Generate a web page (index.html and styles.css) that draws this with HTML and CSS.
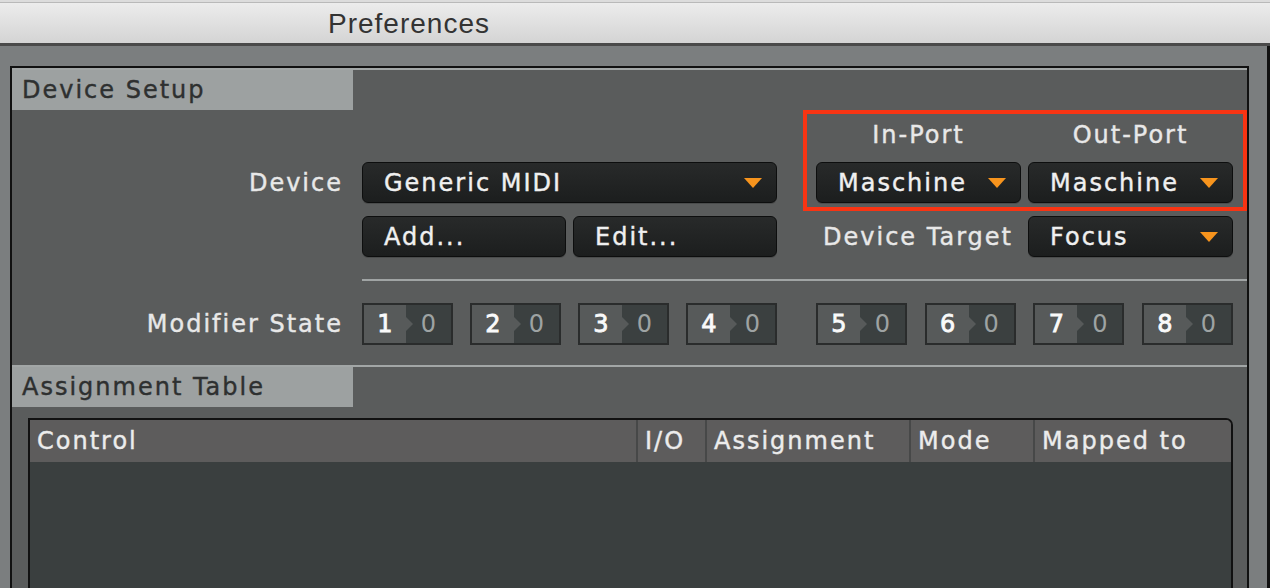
FILE: index.html
```html
<!DOCTYPE html>
<html lang="en">
<head>
    <meta charset="UTF-8">
    <meta name="viewport" content="width=device-width, initial-scale=1.0">
    <title>Preferences</title>
    <link rel="stylesheet" href="styles.css">
</head>
<body>
    <div class="titlebar">
        <span class="title">Preferences</span>
    </div>

    <div class="window">
        <div class="panel">
            <div class="section-head">
                <div class="tab">Device Setup</div>
            </div>

            <section class="setup">
                <div class="setup-grid">
                    <div class="port-label col-in">In-Port</div>
                    <div class="port-label col-out">Out-Port</div>

                    <div class="label">Device</div>
                    <div class="select col-wide">
                        <span>Generic MIDI</span>
                        <svg class="caret" viewBox="0 0 18 10"><polygon points="0,0 18,0 9,10"/></svg>
                    </div>
                    <div class="select col-in">
                        <span>Maschine</span>
                        <svg class="caret" viewBox="0 0 18 10"><polygon points="0,0 18,0 9,10"/></svg>
                    </div>
                    <div class="select col-out">
                        <span>Maschine</span>
                        <svg class="caret" viewBox="0 0 18 10"><polygon points="0,0 18,0 9,10"/></svg>
                    </div>

                    <button class="btn col-a">Add...</button>
                    <button class="btn col-b">Edit...</button>
                    <div class="label col-in target-label">Device Target</div>
                    <div class="select col-out">
                        <span>Focus</span>
                        <svg class="caret" viewBox="0 0 18 10"><polygon points="0,0 18,0 9,10"/></svg>
                    </div>
                </div>

                <!-- annotation box round the port selectors -->
                <div class="highlight"></div>

                <div class="rule"></div>

                <div class="modifier-row">
                    <div class="label">Modifier State</div>
                    <div class="mod-group group-left">
                        <div class="mod"><span class="mod-key">1</span><span class="mod-val">0</span></div>
                        <div class="mod"><span class="mod-key">2</span><span class="mod-val">0</span></div>
                        <div class="mod"><span class="mod-key">3</span><span class="mod-val">0</span></div>
                        <div class="mod"><span class="mod-key">4</span><span class="mod-val">0</span></div>
                    </div>
                    <div class="mod-group group-right">
                        <div class="mod"><span class="mod-key">5</span><span class="mod-val">0</span></div>
                        <div class="mod"><span class="mod-key">6</span><span class="mod-val">0</span></div>
                        <div class="mod"><span class="mod-key">7</span><span class="mod-val">0</span></div>
                        <div class="mod"><span class="mod-key">8</span><span class="mod-val">0</span></div>
                    </div>
                </div>
            </section>

            <div class="section-head">
                <div class="tab">Assignment Table</div>
            </div>

            <div class="table">
                <div class="table-head">
                    <div class="th">Control</div>
                    <div class="th">I/O</div>
                    <div class="th">Assignment</div>
                    <div class="th">Mode</div>
                    <div class="th">Mapped to</div>
                </div>
                <div class="table-body"></div>
            </div>
        </div>
    </div>
</body>
</html>
```

FILE: styles.css
```css
html, body {
    height: 100%;
    overflow: hidden;
}

body {
    margin: 0;
    padding: 0;
    font-family: "DejaVu Sans", sans-serif;
    font-size: 24px;
    letter-spacing: 2px;
    background-color: #7b7e7f;
    -webkit-text-stroke: 0.4px currentColor;
}

.titlebar {
    height: 43px;
    background: linear-gradient(#dcdcdc 0, #dcdcdc 2px, #b9b9b9 2px, #b9b9b9 3px, #ececec 3px, #d4d4d4 100%);
    border-bottom: 3px solid #4a4a4a;
}

.title {
    display: inline-block;
    padding-left: 328px;
    line-height: 47px;
    font-family: "Liberation Sans", sans-serif;
    font-size: 28px;
    letter-spacing: 1px;
    color: #333;
    -webkit-text-stroke: 0;
}

.window {
    background: #7b7e7f;
    padding: 20px 18px 0 10px;
    border-right: 3px solid #111;
    height: 522px;
}

.panel {
    background: #5a5c5c;
    border: 2px solid #111;
    border-bottom: none;
    height: 520px;
    overflow: hidden;
}

.section-head {
    border-top: 2px solid #a2a6a6;
    height: 40px;
}

.tab {
    width: 331px;
    height: 40px;
    line-height: 40px;
    padding-left: 10px;
    background: #9da1a1;
    color: #2e3030;
}

.setup {
    position: relative;
}

.setup-grid,
.modifier-row {
    display: grid;
    grid-template-columns: 343px 204px 204px 25px 205px 205px;
    column-gap: 7px;
}

.setup-grid {
    grid-template-rows: 28px 41px 41px;
    row-gap: 13px;
    padding-top: 11px;
}

.label {
    grid-column: 1;
    text-align: right;
    padding-right: 12px;
    align-self: center;
    color: #e8e8e8;
}

.target-label {
    padding-right: 8px;
}

.port-label {
    text-align: center;
    line-height: 28px;
    color: #e8e8e8;
}

.col-wide { grid-column: 2 / 4; }
.col-a { grid-column: 2; }
.col-b { grid-column: 3; }
.col-in { grid-column: 5; }
.col-out { grid-column: 6; }

.select,
.btn {
    display: flex;
    align-items: center;
    justify-content: space-between;
    box-sizing: border-box;
    height: 41px;
    padding: 0 14px 0 21px;
    background: linear-gradient(#282a2a, #1c1e1e);
    border: 1px solid #0d0e0e;
    border-radius: 6px;
    box-shadow: 0 1px 0 #4a4c4c;
    color: #f0f0f0;
    font-family: inherit;
    font-size: 24px;
    letter-spacing: 2px;
}

.caret {
    width: 18px;
    height: 10px;
    fill: #f7941d;
}

.highlight {
    position: absolute;
    left: 791px;
    top: 0;
    width: 444px;
    height: 101px;
    box-sizing: border-box;
    border: 4px solid #f83413;
    pointer-events: none;
}

.rule {
    height: 2px;
    margin: 22px 0 0 350px;
    background: #a0a4a4;
}

.modifier-row {
    margin-top: 22px;
    margin-bottom: 20px;
    height: 42px;
}

.mod-group {
    display: flex;
    justify-content: space-between;
}

.group-left { grid-column: 2 / 4; }
.group-right { grid-column: 5 / 7; }

.mod {
    display: flex;
    width: 91px;
    height: 42px;
    box-sizing: border-box;
    border: 2px solid #2a2c2c;
    letter-spacing: 0;
}

.mod-key {
    position: relative;
    width: 42px;
    background: #575a5a;
    color: #fafafa;
    text-align: center;
    line-height: 38px;
    -webkit-text-stroke: 0.8px currentColor;
}

.mod-key::after {
    content: "";
    position: absolute;
    right: -7px;
    top: 12px;
    border-left: 7px solid #575a5a;
    border-top: 7px solid transparent;
    border-bottom: 7px solid transparent;
}

.mod-val {
    flex: 1;
    background: #3b4040;
    color: #9ea3a3;
    text-align: center;
    line-height: 38px;
    -webkit-text-stroke: 0;
}

.table {
    margin: 11px 14px 0 16px;
    border: 2px solid #111;
    border-bottom: none;
    border-radius: 0 7px 0 0;
    overflow: hidden;
}

.table-head {
    display: grid;
    grid-template-columns: 606px 69px 204px 124px 1fr;
    height: 42px;
    background: #5d5c5c;
}

.th {
    padding-left: 7px;
    line-height: 42px;
    color: #ececec;
    border-left: 2px solid #474848;
}

.th:first-child {
    border-left: none;
}

.table-body {
    height: 126px;
    background: #3a3f3f;
}
```
